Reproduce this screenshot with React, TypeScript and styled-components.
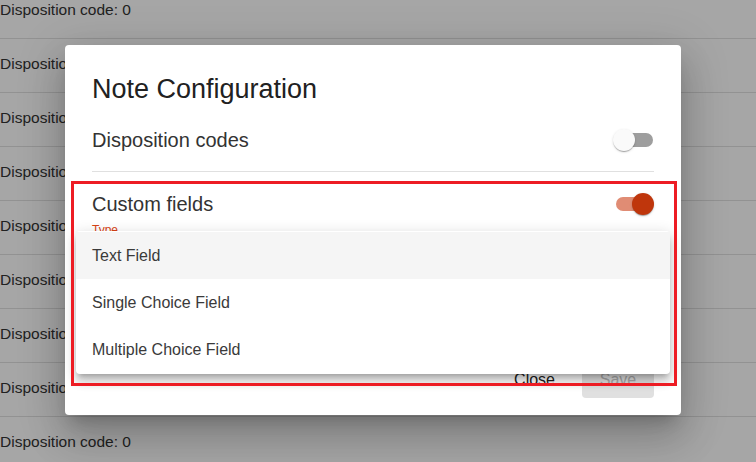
import styled, { createGlobalStyle } from "styled-components";

const GlobalStyle = createGlobalStyle`
  html, body {
    margin: 0;
    padding: 0;
    width: 756px;
    height: 462px;
    overflow: hidden;
    background: #fff;
    font-family: "Liberation Sans", Arial, sans-serif;
  }
`;

const codes = Array.from({ length: 9 }, () => 0);

const menuOptions = ["Text Field", "Single Choice Field", "Multiple Choice Field"];

export default function App() {
  return (
    <>
      <GlobalStyle />
      <Page>
        <CodeList>
          {codes.map((code, i) => (
            <CodeRow key={i}>Disposition code: {code}</CodeRow>
          ))}
        </CodeList>

        <Backdrop>
          <Dialog>
            <Title>Note Configuration</Title>

            <SettingRow>
              <span>Disposition codes</span>
              <Switch $on={false}>
                <Track />
                <Thumb />
              </Switch>
            </SettingRow>

            <Divider />

            <SettingRow $top="12px">
              <span>Custom fields</span>
              <Switch $on>
                <Track />
                <Thumb />
              </Switch>
            </SettingRow>

            <TypeField>
              <FieldLabel>Type</FieldLabel>
              <SelectLine />
            </TypeField>

            <Actions>
              <TextButton>Close</TextButton>
              <SaveButton disabled>Save</SaveButton>
            </Actions>

            <Menu>
              {menuOptions.map((opt, i) => (
                <MenuItem key={opt} $active={i === 0}>
                  {opt}
                </MenuItem>
              ))}
            </Menu>

            {/* annotation frame drawn over the dialog */}
            <Highlight />
          </Dialog>
        </Backdrop>
      </Page>
    </>
  );
}

const Page = styled.div`
  position: relative;
  width: 756px;
  height: 462px;
  overflow: hidden;
`;

const CodeList = styled.ul`
  list-style: none;
  margin: -15px 0 0;
  padding: 0;
`;

const CodeRow = styled.li`
  padding: 16px 0 19px;
  line-height: 18px;
  font-size: 15.5px;
  color: #333;
  border-bottom: 1px solid #e0e0e0;
`;

const Backdrop = styled.div`
  position: absolute;
  inset: 0;
  background: rgba(0, 0, 0, 0.35);
  display: flex;
  justify-content: center;
  align-items: flex-start;
  padding: 45px 10px 0 0;
  box-sizing: border-box;
`;

const Dialog = styled.div`
  position: relative;
  width: 616px;
  box-sizing: border-box;
  padding: 0 27px 17px;
  background: #fff;
  border-radius: 4px;
  box-shadow: 0px 11px 15px -7px rgba(0, 0, 0, 0.2),
    0px 24px 38px 3px rgba(0, 0, 0, 0.14), 0px 9px 46px 8px rgba(0, 0, 0, 0.12);
  display: flex;
  flex-direction: column;
`;

const Title = styled.h2`
  margin: 28px 0 0;
  font-size: 27px;
  line-height: 32px;
  font-weight: 400;
  color: #212121;
`;

const SettingRow = styled.div<{ $top?: string }>`
  display: flex;
  align-items: center;
  justify-content: space-between;
  height: 40px;
  margin-top: ${(p) => p.$top ?? "15px"};
  font-size: 20px;
  color: #333;
`;

const Divider = styled.div`
  height: 1px;
  margin-top: 11px;
  background: #e0e0e0;
`;

const Switch = styled.div<{ $on: boolean }>`
  position: relative;
  width: 41px;
  height: 22px;
  flex-shrink: 0;

  & > div:first-child {
    background: ${(p) => (p.$on ? "#e08c74" : "#9e9e9e")};
  }
  & > div:last-child {
    left: ${(p) => (p.$on ? "19px" : "0")};
    background: ${(p) => (p.$on ? "#bf360c" : "#fafafa")};
  }
`;

const Track = styled.div`
  position: absolute;
  left: 3px;
  right: 1px;
  top: 4px;
  height: 14px;
  border-radius: 7px;
`;

const Thumb = styled.div`
  position: absolute;
  top: 0;
  width: 22px;
  height: 22px;
  border-radius: 50%;
  box-shadow: 0px 2px 1px -1px rgba(0, 0, 0, 0.2),
    0px 1px 1px 0px rgba(0, 0, 0, 0.14), 0px 1px 3px 0px rgba(0, 0, 0, 0.12);
`;

const TypeField = styled.div`
  height: 138px;
  display: flex;
  flex-direction: column;
`;

const FieldLabel = styled.label`
  margin-top: -1px;
  font-size: 12px;
  line-height: 14px;
  color: #d84315;
`;

const SelectLine = styled.div`
  margin-top: 29px;
  height: 2px;
  background: #d84315;
`;

const Actions = styled.div`
  display: flex;
  justify-content: flex-end;
  align-items: center;
  gap: 19px;
  height: 36px;
`;

const TextButton = styled.button`
  height: 36px;
  padding: 0 8px;
  border: none;
  background: transparent;
  font-family: inherit;
  font-size: 16px;
  color: #222;
`;

const SaveButton = styled(TextButton)`
  width: 72px;
  height: 35px;
  border-radius: 4px;
  background: #e0e0e0;
  color: #a9a9a9;
`;

const Menu = styled.ul`
  position: absolute;
  left: 11px;
  top: 186px;
  width: 594px;
  margin: 0;
  padding: 1px 0;
  list-style: none;
  background: #fff;
  border-radius: 4px;
  box-shadow: 0px 5px 5px -3px rgba(0, 0, 0, 0.2),
    0px 8px 10px 1px rgba(0, 0, 0, 0.14), 0px 3px 14px 2px rgba(0, 0, 0, 0.12);
  z-index: 2;
`;

const MenuItem = styled.li<{ $active?: boolean }>`
  height: 47px;
  display: flex;
  align-items: center;
  padding: 0 16px;
  font-size: 16px;
  color: #3a3a3a;
  background: ${(p) => (p.$active ? "#f5f5f5" : "transparent")};
`;

const Highlight = styled.div`
  position: absolute;
  left: 6px;
  top: 136px;
  width: 606px;
  height: 205px;
  box-sizing: border-box;
  border: 3px solid #ed1c24;
  pointer-events: none;
  z-index: 3;
`;
